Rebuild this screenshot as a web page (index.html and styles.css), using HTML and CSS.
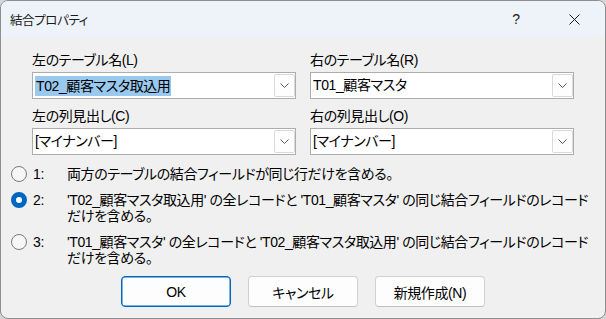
FILE: index.html
```html
<!DOCTYPE html>
<html lang="ja">
<head>
<meta charset="utf-8">
<title>結合プロパティ</title>
<link rel="stylesheet" href="styles.css">
</head>
<body>
<div class="window">
  <div class="titlebar">
    <span class="title">結合プロパティ</span>
    <span class="tb-help">?</span>
    <span class="tb-close"><svg width="11" height="11" viewBox="0 0 11 11"><path d="M0.5 0.5L10.5 10.5M10.5 0.5L0.5 10.5" stroke="#1a1a1a" stroke-width="1" fill="none"/></svg></span>
  </div>
  <div class="content">
    <div class="fields">
      <div class="field">
        <div class="label">左のテーブル名(L)</div>
        <div class="combo"><span class="value"><span class="sel">T02_顧客マスタ取込用</span></span><span class="drop"><svg width="9" height="5" viewBox="0 0 9 5"><path d="M0.5 0.5L4.5 4.5L8.5 0.5" stroke="#5a5a5a" fill="none"/></svg></span></div>
      </div>
      <div class="field">
        <div class="label">右のテーブル名(R)</div>
        <div class="combo"><span class="value">T01_顧客マスタ</span><span class="drop"><svg width="9" height="5" viewBox="0 0 9 5"><path d="M0.5 0.5L4.5 4.5L8.5 0.5" stroke="#5a5a5a" fill="none"/></svg></span></div>
      </div>
      <div class="field">
        <div class="label">左の列見出し(C)</div>
        <div class="combo"><span class="value">[マイナンバー]</span><span class="drop"><svg width="9" height="5" viewBox="0 0 9 5"><path d="M0.5 0.5L4.5 4.5L8.5 0.5" stroke="#5a5a5a" fill="none"/></svg></span></div>
      </div>
      <div class="field">
        <div class="label">右の列見出し(O)</div>
        <div class="combo"><span class="value">[マイナンバー]</span><span class="drop"><svg width="9" height="5" viewBox="0 0 9 5"><path d="M0.5 0.5L4.5 4.5L8.5 0.5" stroke="#5a5a5a" fill="none"/></svg></span></div>
      </div>
    </div>
    <div class="options">
      <div class="option">
        <span class="radio"></span><span class="num">1:</span>
        <span class="text">両方のテーブルの結合フィールドが同じ行だけを含める。</span>
      </div>
      <div class="option">
        <span class="radio checked"></span><span class="num">2:</span>
        <span class="text">'T02_顧客マスタ取込用' の全レコードと 'T01_顧客マスタ' の同じ結合フィールドのレコード<br>だけを含める。</span>
      </div>
      <div class="option">
        <span class="radio"></span><span class="num">3:</span>
        <span class="text">'T01_顧客マスタ' の全レコードと 'T02_顧客マスタ取込用' の同じ結合フィールドのレコード<br>だけを含める。</span>
      </div>
    </div>
    <div class="buttons">
      <button class="btn default">OK</button>
      <button class="btn">キャンセル</button>
      <button class="btn">新規作成(N)</button>
    </div>
  </div>
</div>
</body>
</html>
```

FILE: styles.css
```css
html, body {
  margin: 0;
  padding: 0;
  background: #d6d6d6;
}
body {
  font-family: "Liberation Sans", "Noto Sans CJK JP", sans-serif;
  font-size: 14px;
  letter-spacing: -0.4px;
  font-feature-settings: "palt";
  color: #000;
}
.window {
  width: 606px;
  height: 319px;
  box-sizing: border-box;
  border: 1px solid #8e8e8e;
  border-radius: 8px;
  overflow: hidden;
  background: #f0f0f0;
  display: flex;
  flex-direction: column;
}
.titlebar {
  height: 36px;
  flex: none;
  background: #eef3f9;
  display: flex;
  align-items: center;
  padding-left: 9px;
  padding-right: 25px;
}
.title {
  flex: 1;
  font-size: 12.5px;
  color: #1a1a1a;
}
.tb-help {
  width: 20px;
  text-align: center;
  font-size: 14px;
  margin-right: 43px;
  color: #1a1a1a;
}
.tb-close {
  display: flex;
  width: 11px;
  height: 11px;
}
.content {
  flex: 1;
  padding: 12px 0 0 0;
  display: flex;
  flex-direction: column;
}
.fields {
  display: grid;
  grid-template-columns: 264px 264px;
  column-gap: 14px;
  row-gap: 6px;
  padding-left: 31px;
}
.label {
  height: 23px;
  line-height: 23px;
  white-space: nowrap;
}
.combo {
  height: 27px;
  box-sizing: border-box;
  border: 1px solid #adadad;
  background: #fff;
  display: flex;
  align-items: center;
  padding: 1px 0 1px 2px;
}
.value {
  flex: 1;
  white-space: nowrap;
  line-height: 19px;
}
.sel {
  display: inline-block;
  background: #99c9ef;
  padding: 0 1px 0 1px;
  line-height: 20px;
}
.drop {
  width: 21px;
  height: 23px;
  box-sizing: border-box;
  border: 1px solid #dadada;
  border-radius: 2px;
  background: #fdfdfd;
  display: flex;
  align-items: center;
  justify-content: center;
}
.options {
  margin-top: 11px;
  display: flex;
  flex-direction: column;
  row-gap: 10px;
  padding-left: 10px;
  padding-right: 4px;
}
.option {
  display: flex;
  align-items: flex-start;
  line-height: 16px;
}
.radio {
  flex: none;
  width: 16px;
  height: 16px;
  box-sizing: border-box;
  border: 1px solid #7a7a7a;
  border-radius: 50%;
  background: #f6f6f6;
  margin-right: 6px;
}
.radio.checked {
  border: 5px solid #0067c0;
  background: #fff;
}
.num {
  flex: none;
  width: 34px;
}
.text {
  flex: 1;
  white-space: nowrap;
}
.buttons {
  margin-top: 10px;
  display: flex;
  justify-content: center;
  column-gap: 17px;
}
.btn {
  width: 110px;
  height: 31px;
  box-sizing: border-box;
  border: 1px solid #d0d0d0;
  border-bottom-color: #c0c0c0;
  border-radius: 4px;
  background: #fdfdfd;
  font-family: inherit;
  font-size: 14px;
  letter-spacing: -0.4px;
  font-feature-settings: "palt";
  color: #000;
  padding: 0;
}
.btn.default {
  border: 1px solid #0067c0;
  box-shadow: inset 0 0 0 0.5px #0067c0;
}
```
